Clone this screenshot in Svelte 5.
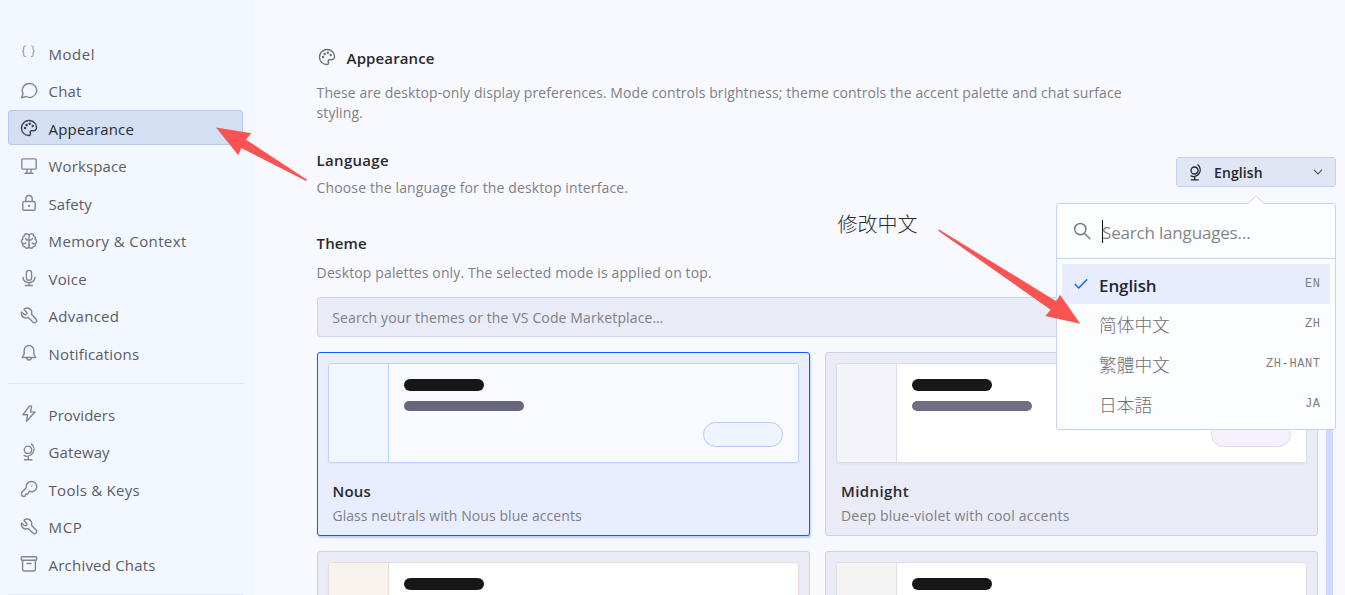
<script lang="ts">
  type Item = { icon: string; label: string; ls: number };

  const primary: Item[] = [
    { icon: 'json', label: 'Model', ls: 0.5 },
    { icon: 'chat', label: 'Chat', ls: 0.1 },
    { icon: 'palette', label: 'Appearance', ls: 0.15 },
    { icon: 'desktop', label: 'Workspace', ls: 0.13 },
    { icon: 'lock', label: 'Safety', ls: 0.05 },
    { icon: 'brain', label: 'Memory & Context', ls: 0.39 },
    { icon: 'mic', label: 'Voice', ls: 0.15 },
    { icon: 'wrench', label: 'Advanced', ls: 0.27 },
    { icon: 'bell', label: 'Notifications', ls: 0.18 }
  ];
  const secondary: Item[] = [
    { icon: 'bolt', label: 'Providers', ls: 0.02 },
    { icon: 'globe', label: 'Gateway', ls: 0.08 },
    { icon: 'key', label: 'Tools & Keys', ls: 0.25 },
    { icon: 'wrench', label: 'MCP', ls: 0.6 },
    { icon: 'archive', label: 'Archived Chats', ls: 0.2 }
  ];

  const icons: Record<string, string> = {
    json: 'M4.800 1.800H4.500c-.8 0-1.200.5-1.200 1.300V5c0 .8-.4 1.200-1.100 1.400.7.2 1.100.7 1.100 1.400v1.900c0 .8.4 1.300 1.200 1.300h.3M10.200 1.800h.3c.8 0 1.200.5 1.200 1.300V5c0 .8.4 1.200 1.100 1.400-.7.2-1.100.7-1.100 1.400v1.900c0 .8-.4 1.300-1.200 1.300h-.3',
    chat: 'M8.600 1.300a6.200 6.200 0 1 1-3 11.600l-4.100 1.100 1.200-3.700A6.200 6.200 0 0 1 8.600 1.300Z',
    palette:
      'M1.300 8A6.700 6.700 0 0 1 8 1.300c3.700 0 6.700 2.700 6.700 6.200 0 1.900-1.500 3-3.300 3h-1.200c-1 0-1.500.9-1 1.800.5 1-.1 2.400-1.400 2.400C4.200 14.700 1.300 11.800 1.300 8Z',
    desktop: 'M2.600 1.700h10.800a1 1 0 0 1 1 1v7.100a1 1 0 0 1-1 1H2.600a1 1 0 0 1-1-1V2.700a1 1 0 0 1 1-1ZM6.200 10.800v3.500M9.800 10.800v3.500M4.500 14.400h7',
    lock: 'M3.800 6.600h8.400a1.300 1.300 0 0 1 1.300 1.300v5.300a1.300 1.300 0 0 1-1.300 1.300H3.800a1.300 1.300 0 0 1-1.300-1.300V7.900a1.300 1.300 0 0 1 1.300-1.300ZM5.200 6.500V4.200a2.800 2.800 0 0 1 5.600 0v2.300',
    brain:
      'M8 3.200C7.700 1 4 .8 3.800 3.400 2.200 3.700 2 5.500 2.700 6.300.7 7 .8 9.800 2.600 10.300 1.800 12 3 13.200 4.300 13.100c.8 2 3.300 1.700 3.700-.2M8 3.200C8.300 1 12 .8 12.200 3.400c1.600.3 1.800 2.100 1.100 2.900 2 .7 1.900 3.500.1 4 .8 1.700-.4 2.900-1.700 2.800-.8 2-3.300 1.700-3.700-.2M8 3v10M5 5.700c.2 1.200 1.500 1.700 2.800 1.300M11 5.700c-.2 1.200-1.500 1.700-2.800 1.300M2.700 10.200c1 .5 2 .2 2.500-.5M13.300 10.200c-1 .5-2 .2-2.500-.5',
    mic: 'M8 1.200a2.300 2.300 0 0 1 2.300 2.300v4.200a2.300 2.300 0 0 1-4.600 0V3.500A2.300 2.300 0 0 1 8 1.200ZM2.700 7.500a5.300 4.600 0 0 0 10.600 0M8 12.200v2.500M5 14.700h6',
    wrench:
      'M4.300 1.500a4.100 4.100 0 0 1 5.900 4.900l4 4.300a1.900 1.900 0 0 1-2.700 2.700L7.200 9.300A4.100 4.100 0 0 1 1.400 4.400l2.200 2.100c.7.600 1.500.6 2.100 0s.6-1.400 0-2.100L3.600 2.200c-.2-.3.300-.6.700-.7Z',
    bell: 'M8 1.400a4.300 4.300 0 0 0-4.300 4.300V9L2 12h12l-1.700-3V5.700A4.300 4.300 0 0 0 8 1.400ZM6 12.200a2 2 0 0 0 4 0',
    bolt: 'M8.300 1 2.600 8.700h4.200L5.800 14.500 13.300 6.300H9.300l1-5.300Z',
    globe: 'M7.100 2.800a3.300 3.300 0 1 1 0 6.600 3.300 3.300 0 0 1 0-6.600ZM10.200.8a6.200 6.200 0 0 1-6.500 10.400M7.300 12.300v2.500M4 14.900h6.600',
    key: 'M10 1.400a4.500 4.500 0 0 0-4.400 5.500l-4.100 4.300c-.2 1.200-.2 2 .3 3 1 .5 1.900.5 2.800.2l.5-1.900h1.600l1.700-2.600A4.500 4.500 0 1 0 10 1.400Z',
    archive: 'M1.800 1.600h12.400a.6.6 0 0 1 .6.6v1.900a.6.6 0 0 1-.6.6H1.800a.6.6 0 0 1-.6-.6V2.200a.6.6 0 0 1 .6-.6ZM2.300 4.700v8a1.500 1.500 0 0 0 1.500 1.500h8.400a1.500 1.500 0 0 0 1.500-1.500v-8M6.200 7.500h3.600',
    search: 'M6.500 1.300a5 5 0 1 1 0 10 5 5 0 0 1 0-10ZM10.200 10 15 14.800',
    check: 'M2.300 8.400 5.800 12 13.700 3.700',
    chevron: 'M3 5.500 8 10.500 13 5.500'
  };

  const dots: Record<string, [number, number, number][]> = {
    palette: [[4.5, 8, 1.1], [5.9, 5.3, 1.1], [8.7, 4.3, 1.1], [11.3, 6.3, 1.1]],
    lock: [[8, 10.600, 1]],
    key: [[10.500, 5.300, 0.700]],
    brain: [[8, 11.300, 0.900]]
  };

  const themes = [
    { name: 'Nous', desc: 'Glass neutrals with Nous blue accents', cls: 'nous', selected: true },
    { name: 'Midnight', desc: 'Deep blue-violet with cool accents', cls: 'midnight', selected: false },
    { name: '', desc: '', cls: 'ember', selected: false },
    { name: '', desc: '', cls: 'mono', selected: false }
  ];

  const languages = [
    { name: 'English', code: 'EN', cls: 'on' },
    { name: '简体中文', code: 'ZH', cls: 'sc' },
    { name: '繁體中文', code: 'ZH-HANT', cls: 'tc' },
    { name: '日本語', code: 'JA', cls: 'jp' }
  ];
</script>

{#snippet icon(name: string, size: number)}
  <svg class="icon" width={size} height={size} viewBox="0 0 16 16" aria-hidden="true">
    <path d={icons[name]} />
    {#each dots[name] ?? [] as [cx, cy, r]}
      <circle {cx} {cy} {r} />
    {/each}
  </svg>
{/snippet}

{#snippet navList(items: Item[])}
  <ul>
    {#each items as it}
      <li class:active={it.label === 'Appearance'} class:faint={it.icon === 'json'}>
        {@render icon(it.icon, 18)}
        <span style:letter-spacing="{it.ls}px">{it.label}</span>
      </li>
    {/each}
  </ul>
{/snippet}

<div class="app">
  <nav>
    {@render navList(primary)}
    <hr />
    {@render navList(secondary)}
    <hr />
  </nav>

  <main>
    <header>
      <h1>{@render icon('palette', 18)}<span>Appearance</span></h1>
      <p>These are desktop-only display preferences. Mode controls brightness; theme controls the accent palette and chat surface styling.</p>
    </header>

    <section class="language">
      <div>
        <h2>Language</h2>
        <p>Choose the language for the desktop interface.</p>
      </div>
      <div class="picker">
        <button>
          {@render icon('globe', 17)}
          <span>English</span>
          {@render icon('chevron', 12)}
        </button>
        <div class="popover">
          <svg class="notch" width="20" height="10" viewBox="0 0 20 10"><path d="M0 10 L1 9.500 L10 .700 L19 9.500 L20 10Z" class="fill" /><path d="M1 9.200 10 .700 19 9.200" /></svg>
          <div class="search">
            {@render icon('search', 18)}
            <span class="caret"></span>
            <span class="ph">Search languages…</span>
          </div>
          <ul>
            {#each languages as l}
              <li class={l.cls}>
                <span class="mark">{#if l.cls === 'on'}{@render icon('check', 16)}{/if}</span>
                <span class="name">{l.name}</span>
                <code>{l.code}</code>
              </li>
            {/each}
          </ul>
        </div>
      </div>
    </section>

    <section class="theme">
      <h2>Theme</h2>
      <p>Desktop palettes only. The selected mode is applied on top.</p>
      <div class="field">Search your themes or the VS Code Marketplace…</div>
      <div class="grid">
        {#each themes as t}
          <article class={t.cls} class:selected={t.selected}>
            <div class="preview">
              <div class="side"></div>
              <div class="body">
                <i class="bar one"></i>
                <i class="bar two"></i>
                <i class="pill"></i>
              </div>
            </div>
            <h3>{t.name}</h3>
            <p>{t.desc}</p>
          </article>
        {/each}
      </div>
    </section>
    <div class="scrollbar"></div>
  </main>

  <div class="note">修改中文</div>
  <svg class="arrows" width="1345" height="595" viewBox="0 0 1345 595">
    <polygon points="216,127.500 251.300,133.300 246,139.800 307,179.700 306,181 241.300,148 238.300,155.300" />
    <polygon points="938.200,230.800 939,229.500 1056.200,301.200 1060,294.700 1080.200,323.700 1045.300,316 1050.700,309.800" />
  </svg>
</div>

<style>
  :global(body) {
    margin: 0;
    overflow: hidden;
  }
  .app {
    position: relative;
    display: flex;
    width: 1345px;
    height: 595px;
    overflow: hidden;
    background: #f8f9ff;
    font-family: 'Open Sans', 'Noto Sans', sans-serif;
    font-size: 14px;
    color: #808084;
  }
  ul, h1, h2, h3, p { margin: 0; padding: 0; list-style: none; }
  p, .field { letter-spacing: 0.13px; }
  .icon {
    flex: none;
    display: block;
    fill: none;
    stroke: currentColor;
    stroke-width: 1.25;
    stroke-linejoin: round;
    stroke-linecap: round;
  }
  .icon circle { fill: currentColor; stroke: none; }

  nav {
    box-sizing: border-box;
    flex: none;
    width: 255px;
    padding: 34.9px 12px 0 8px;
    background: #f3f7ff;
  }
  nav ul { display: flex; flex-direction: column; gap: 2.5px; }
  nav li {
    box-sizing: border-box;
    display: flex;
    align-items: center;
    gap: 10.6px;
    height: 35px;
    padding: 0 0 0 11px;
    border: 1px solid transparent;
    border-radius: 3px;
    font-size: 15px;
    color: #5b5d63;
  }
  nav li .icon { margin-top: 1.4px; color: #85878e; }
  nav li.faint .icon { margin-top: 2px; color: #9a9ca3; stroke-width: 1; }
  nav li span { padding-top: 3px; line-height: 20px; }
  nav li.active { background: #d5dff3; border-color: #b6c9ee; color: #2b2c30; }
  nav li.active .icon { color: #3d4048; }
  nav hr { height: 1px; margin: 13px 0 12px; border: 0; background: #e2e7fb; }

  main { position: relative; flex: 1; padding: 46px 9px 0 61.6px; }
  h1, h2, h3 { font-weight: 600; color: #29292c; letter-spacing: 0.12px; }
  h1 { display: flex; align-items: center; gap: 11px; height: 24px; font-size: 15px; }
  h1 .icon { margin: -2px 0 0 1px; color: #707176; }
  header p { width: 830px; margin-top: 13px; line-height: 20px; letter-spacing: 0.08px; }
  .language { display: flex; justify-content: space-between; padding-top: 27px; }
  h2 { font-size: 15px; line-height: 20px; }
  .language h2 { letter-spacing: 0.3px; }
  .language p { margin-top: 8px; line-height: 20px; }
  .picker { position: relative; margin-top: 7px; }
  button {
    box-sizing: border-box;
    display: flex;
    align-items: center;
    width: 160px;
    height: 30px;
    padding: 0 11px 0 10px;
    border: 1px solid #c5d1f2;
    border-radius: 3px;
    background: #e1e6f4;
    color: #26272b;
    font: 600 14px 'Open Sans', sans-serif;
    letter-spacing: 0.12px;
  }
  button span { flex: 1; margin-left: 10px; padding-top: 1px; text-align: left; }
  button .icon:last-child { stroke-width: 1.600; color: #55575e; }

  .popover {
    position: absolute;
    z-index: 2;
    top: 46px;
    right: 0;
    box-sizing: border-box;
    width: 280px;
    height: 227px;
    border: 1px solid #c5d4f3;
    border-radius: 3px;
    background: #fcfdfe;
  }
  .notch { position: absolute; top: -9px; left: 189px; fill: none; stroke: #c5d4f3; }
  .notch .fill { fill: #fcfdfe; stroke: none; }
  .search {
    display: flex;
    align-items: center;
    height: 54px;
    padding-left: 16px;
    border-bottom: 1px solid #c2d5fb;
    font-size: 17px;
    color: #858588;
  }
  .search .icon { color: #77777b; stroke-width: 1.300; }
  .caret { width: 1px; height: 23px; margin-left: 11px; background: #111; }
  .ph { margin-left: -1px; padding-top: 3px; letter-spacing: -0.18px; }
  .popover ul { padding: 5px; }
  .popover li {
    display: flex;
    align-items: center;
    height: 40px;
    padding: 0 10px 0 11px;
    border-radius: 2px;
    font-size: 17.700px;
    color: #707073;
  }
  .popover li.on { background: #e7edff; color: #25263a; font-weight: 600; font-size: 17px; letter-spacing: -0.1px; }
  .mark { width: 26px; color: #1464ff; }
  .mark .icon { stroke-width: 1.500; }
  .name { flex: 1; padding-bottom: 1px; }
  .on .name { padding: 3px 0 0; }
  .sc .name { font-family: 'Noto Sans CJK SC', sans-serif; font-weight: 300; }
  .tc .name { font-family: 'Noto Sans CJK TC', sans-serif; font-weight: 300; }
  .jp .name { font-family: 'Noto Sans CJK JP', sans-serif; font-weight: 300; }
  code { font: 400 12px 'Liberation Mono', monospace; letter-spacing: 0.6px; color: #808084; margin-right: -0.6px; padding-bottom: 1px; }

  .theme { padding-top: 35px; }
  .theme > p { margin-top: 10px; line-height: 20px; }
  .field {
    box-sizing: border-box;
    width: 1001px;
    height: 40px;
    margin-top: 14px;
    padding: 0 14.6px;
    border: 1px solid #c8d6f0;
    border-radius: 3px;
    background: #e9ebf7;
    line-height: 40px;
  }
  .grid { display: grid; grid-template-columns: 493px 493px; gap: 15px; margin-top: 15px; }
  article {
    box-sizing: border-box;
    height: 184px;
    padding: 10px;
    border: 1px solid #c8d3ec;
    border-radius: 3px;
    background: #e9ebf7;
  }
  article.selected { border-color: #0f5cf5; background: #e8eeff; box-shadow: 1px 2px 2px #b9cffc; }
  .preview {
    --line: #dcdcec;
    box-sizing: border-box;
    display: flex;
    height: 100px;
    border: 1px solid var(--line);
    border-radius: 3px;
    background: #fff;
    overflow: hidden;
    box-shadow: 0 1px 2px #0000000d;
  }
  .side { box-sizing: border-box; width: 60px; background: #f4f3f9; border-right: 1px solid var(--line); }
  .body { flex: 1; display: flex; flex-direction: column; padding: 15px; }
  .bar { height: 12px; width: 80px; border-radius: 6px; background: #171717; }
  .bar.two { height: 10px; width: 120px; margin-top: 10px; border-radius: 5px; background: #716e84; }
  .pill {
    box-sizing: border-box;
    width: 80px;
    height: 25px;
    margin: 11px 0 0 auto;
    border: 1px solid #dddaee;
    border-radius: 13px;
    background: #f4f1fc;
  }
  .nous .preview { --line: #bfd3ff; background: #f9faff; }
  .nous .side { background: #f2f7ff; }
  .nous .bar.two { background: #68667b; }
  .nous .pill { background: #f0f4ff; border-color: #b3cbfb; }
  .ember .preview { --line: #e8dcd8; }
  .ember .side { background: #f9f3ef; }
  .mono .preview { --line: #e0e0e2; }
  .mono .side { background: #f4f4f5; }
  h3 { margin: 18px 0 0 5px; font-size: 15px; line-height: 20px; }
  .midnight h3 { margin-left: 5.400px; letter-spacing: 0.4px; }
  article p { margin: 5px 0 0 4.800px; line-height: 20px; letter-spacing: 0.07px; }
  .midnight p { margin-left: 5.400px; letter-spacing: 0.2px; }
  .scrollbar { position: absolute; top: 300px; right: 12px; bottom: 0; width: 7px; background: #cadbff; }

  .note { position: absolute; z-index: 3; left: 837.500px; top: 210px; font: 300 20px/28px 'Noto Sans CJK SC', sans-serif; color: #2c2c2c; }
  .arrows { position: absolute; z-index: 4; left: 0; top: 0; fill: #fb5352; pointer-events: none; }
</style>
